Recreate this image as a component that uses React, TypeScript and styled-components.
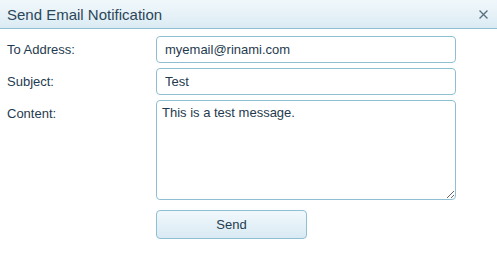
import React from 'react'
import styled, { createGlobalStyle } from 'styled-components'

const Global = createGlobalStyle`
  html, body {
    margin: 0;
    padding: 0;
    background: #ffffff;
    font-family: "Liberation Sans", Arial, sans-serif;
  }
`

export default function App() {
  return (
    <>
      <Global />
      <Dialog>
        <TitleBar>
          <Title>Send Email Notification</Title>
          <CloseButton aria-label="close">
            <svg width="9" height="9" viewBox="0 0 9 9">
              <path d="M1 1 L8 8 M8 1 L1 8" stroke="#55707f" strokeWidth="1.3" strokeLinecap="square" />
            </svg>
          </CloseButton>
        </TitleBar>
        <Form>
          <Label>To Address:</Label>
          <TextInput defaultValue="myemail@rinami.com" spellCheck={false} />
          <Label>Subject:</Label>
          <TextInput defaultValue="Test" />
          <Label $top>Content:</Label>
          <TextArea defaultValue="This is a test message." />
          <span />
          <SendButton>Send</SendButton>
        </Form>
      </Dialog>
    </>
  )
}

const Dialog = styled.div`
  width: 497px;
  height: 259px;
  background: #ffffff;
  color: #1f3b4f;
`

const TitleBar = styled.div`
  height: 28px;
  border-bottom: 1px solid #8fbfd2;
  background: linear-gradient(#f1f8fc, #dbebf3);
  display: flex;
  align-items: center;
  justify-content: space-between;
  padding: 0 9px 0 7px;
`

const Title = styled.div`
  font-size: 15px;
  color: #2c4658;
`

const CloseButton = styled.div`
  display: flex;
  align-items: center;
  cursor: pointer;
`

const Form = styled.div`
  display: grid;
  grid-template-columns: 149px 300px;
  row-gap: 5px;
  padding: 7px 0 0 7px;
  align-items: center;
`

const Label = styled.div<{ $top?: boolean }>`
  font-size: 13px;
  color: #1f3b4f;
  align-self: ${(p) => (p.$top ? 'start' : 'center')};
  padding-top: ${(p) => (p.$top ? '6px' : '0')};
`

const fieldBase = `
  box-sizing: border-box;
  width: 300px;
  border: 1px solid #8fbfd2;
  border-radius: 4px;
  font-family: "Liberation Sans", Arial, sans-serif;
  font-size: 13px;
  color: #1f3b4f;
  background: #ffffff;
  outline: none;
`

const TextInput = styled.input`
  ${fieldBase}
  height: 27px;
  padding: 0 8px;
`

const TextArea = styled.textarea`
  ${fieldBase}
  height: 100px;
  padding: 4px 5px;
  margin: 0;
  display: block;
`

const SendButton = styled.button`
  margin-top: 5px;
  width: 151px;
  height: 29px;
  border: 1px solid #8fbfd2;
  border-radius: 4px;
  background: linear-gradient(#f1f8fc, #d9eaf3);
  font-family: "Liberation Sans", Arial, sans-serif;
  font-size: 13px;
  color: #1f3b4f;
  cursor: pointer;
`
